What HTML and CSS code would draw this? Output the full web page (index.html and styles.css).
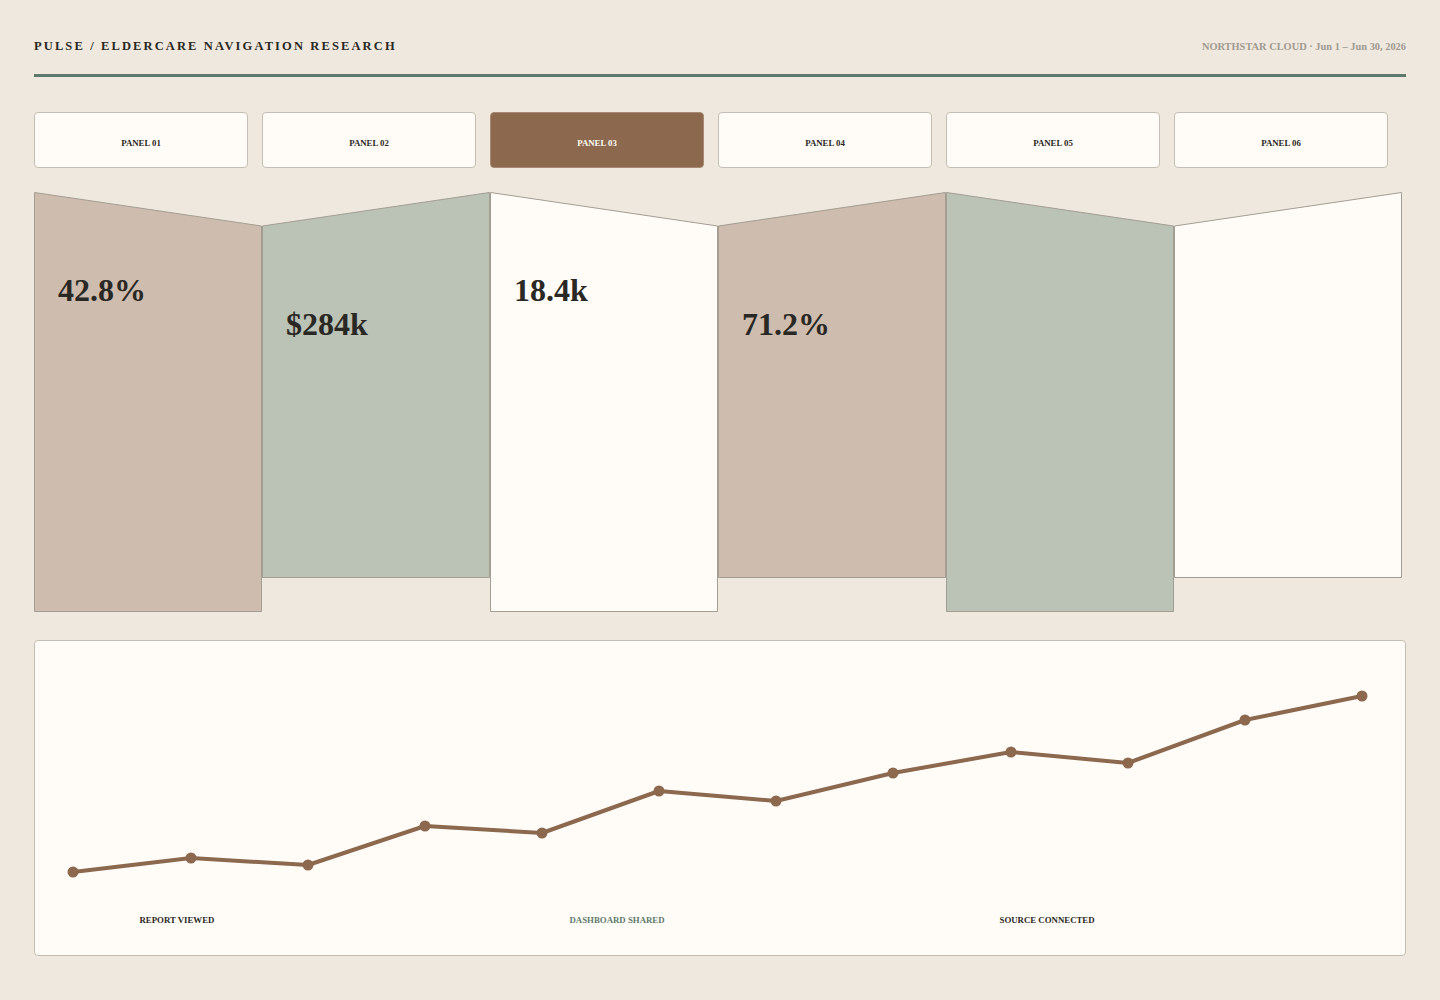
FILE: index.html
```html
<!DOCTYPE html>
<html lang="en">
<head>
  <meta charset="UTF-8">
  <title>Pulse / Eldercare Navigation Research</title>
  <link rel="stylesheet" href="styles.css">
</head>
<body>
  <div class="page">
    <header class="top-bar">
      <h1 class="title">PULSE / ELDERCARE NAVIGATION RESEARCH</h1>
      <div class="meta">NORTHSTAR CLOUD · Jun 1 – Jun 30, 2026</div>
    </header>

    <nav class="tabs">
      <button class="tab">PANEL 01</button>
      <button class="tab">PANEL 02</button>
      <button class="tab active">PANEL 03</button>
      <button class="tab">PANEL 04</button>
      <button class="tab">PANEL 05</button>
      <button class="tab">PANEL 06</button>
    </nav>

    <section class="folds">
      <div class="fold fold-down tone-clay">
        <svg class="fold-shape" viewBox="0 0 228 420" preserveAspectRatio="none">
          <polygon points="0.5,0.5 227.5,34 227.5,419.5 0.5,419.5" vector-effect="non-scaling-stroke"/>
        </svg>
        <div class="value">42.8%</div>
      </div>
      <div class="fold fold-up tone-sage">
        <svg class="fold-shape" viewBox="0 0 228 386" preserveAspectRatio="none">
          <polygon points="0.5,34 227.5,0.5 227.5,385.5 0.5,385.5" vector-effect="non-scaling-stroke"/>
        </svg>
        <div class="value">$284k</div>
      </div>
      <div class="fold fold-down tone-paper">
        <svg class="fold-shape" viewBox="0 0 228 420" preserveAspectRatio="none">
          <polygon points="0.5,0.5 227.5,34 227.5,419.5 0.5,419.5" vector-effect="non-scaling-stroke"/>
        </svg>
        <div class="value">18.4k</div>
      </div>
      <div class="fold fold-up tone-clay">
        <svg class="fold-shape" viewBox="0 0 228 386" preserveAspectRatio="none">
          <polygon points="0.5,34 227.5,0.5 227.5,385.5 0.5,385.5" vector-effect="non-scaling-stroke"/>
        </svg>
        <div class="value">71.2%</div>
      </div>
      <div class="fold fold-down tone-sage">
        <svg class="fold-shape" viewBox="0 0 228 420" preserveAspectRatio="none">
          <polygon points="0.5,0.5 227.5,34 227.5,419.5 0.5,419.5" vector-effect="non-scaling-stroke"/>
        </svg>
      </div>
      <div class="fold fold-up tone-paper">
        <svg class="fold-shape" viewBox="0 0 228 386" preserveAspectRatio="none">
          <polygon points="0.5,34 227.5,0.5 227.5,385.5 0.5,385.5" vector-effect="non-scaling-stroke"/>
        </svg>
      </div>
    </section>

    <section class="chart-card">
      <svg class="trend" viewBox="0 0 1372 260" width="1372" height="260">
        <polyline class="trend-line" points="39,232 157,218 274,225 391,186 508,193 625,151 742,161 859,133 977,112 1094,123 1211,80 1328,56"/>
        <g class="trend-dots">
          <circle cx="39" cy="232" r="5.5"/>
          <circle cx="157" cy="218" r="5.5"/>
          <circle cx="274" cy="225" r="5.5"/>
          <circle cx="391" cy="186" r="5.5"/>
          <circle cx="508" cy="193" r="5.5"/>
          <circle cx="625" cy="151" r="5.5"/>
          <circle cx="742" cy="161" r="5.5"/>
          <circle cx="859" cy="133" r="5.5"/>
          <circle cx="977" cy="112" r="5.5"/>
          <circle cx="1094" cy="123" r="5.5"/>
          <circle cx="1211" cy="80" r="5.5"/>
          <circle cx="1328" cy="56" r="5.5"/>
        </g>
      </svg>
      <div class="events">
        <span class="event">REPORT VIEWED</span>
        <span class="event highlight">DASHBOARD SHARED</span>
        <span class="event">SOURCE CONNECTED</span>
      </div>
    </section>
  </div>
</body>
</html>
```

FILE: styles.css
```css
:root {
  --bg: #efe8de;
  --paper: #fffcf7;
  --ink: #2a2824;
  --muted: #a09a90;
  --sage-dark: #5e7a6c;
  --brown: #8b684e;
  --clay: #cebcae;
  --sage: #bbc2b6;
  --edge: #a39d92;
  --card-border: #c4beb3;
}

body {
  margin: 0;
  background-color: var(--bg);
  color: var(--ink);
  font-family: "Liberation Serif", "DejaVu Serif", serif;
}

.page {
  padding: 0 34px;
}

.top-bar {
  display: flex;
  justify-content: space-between;
  align-items: flex-end;
  height: 77px;
  padding-bottom: 21px;
  border-bottom: 3px solid var(--sage-dark);
  box-sizing: border-box;
}

.title {
  margin: 0;
  font-size: 12.5px;
  line-height: 14px;
  font-weight: bold;
  letter-spacing: 2.12px;
}

.meta {
  font-size: 10.4px;
  line-height: 12px;
  font-weight: bold;
  color: var(--muted);
}

.tabs {
  display: flex;
  gap: 14px;
  margin-top: 35px;
}

.tab {
  width: 214px;
  height: 56px;
  padding-top: 6px;
  background: var(--paper);
  border: 1.5px solid var(--card-border);
  border-radius: 4px;
  font-family: inherit;
  font-size: 8.8px;
  font-weight: bold;
  color: var(--ink);
  cursor: pointer;
}

.tab.active {
  background: var(--brown);
  color: var(--paper);
  border-color: #a88a73;
}

.folds {
  display: flex;
  align-items: flex-start;
  margin-top: 24px;
}

.fold {
  position: relative;
  width: 228px;
  flex-shrink: 0;
  box-sizing: border-box;
}

.fold-down {
  height: 420px;
  padding: 78px 24px 0;
}

.fold-up {
  height: 386px;
  padding: 112px 24px 0;
}

.fold-shape {
  position: absolute;
  inset: 0;
  width: 100%;
  height: 100%;
}

.fold-shape polygon {
  stroke: var(--edge);
  stroke-width: 1;
}

.tone-clay .fold-shape polygon { fill: var(--clay); }
.tone-sage .fold-shape polygon { fill: var(--sage); }
.tone-paper .fold-shape polygon { fill: var(--paper); }

.value {
  position: relative;
  font-size: 32px;
  font-weight: bold;
  line-height: 40px;
  color: var(--ink);
}

.chart-card {
  margin-top: 28px;
  height: 316px;
  background: var(--paper);
  border: 1.5px solid var(--card-border);
  border-radius: 4px;
  box-sizing: border-box;
}

.trend {
  display: block;
  margin: -1.5px 0 0 -1.5px;
}

.trend-line {
  fill: none;
  stroke: var(--brown);
  stroke-width: 4;
  stroke-linejoin: round;
}

.trend-dots circle {
  fill: var(--brown);
}

.events {
  display: flex;
  padding-left: 104.5px;
  margin-top: 15px;
}

.event {
  flex: 0 0 430px;
  font-size: 8.8px;
  font-weight: bold;
  color: var(--ink);
}

.event:last-child {
  flex-basis: auto;
}

.event.highlight {
  color: var(--sage-dark);
}
```
